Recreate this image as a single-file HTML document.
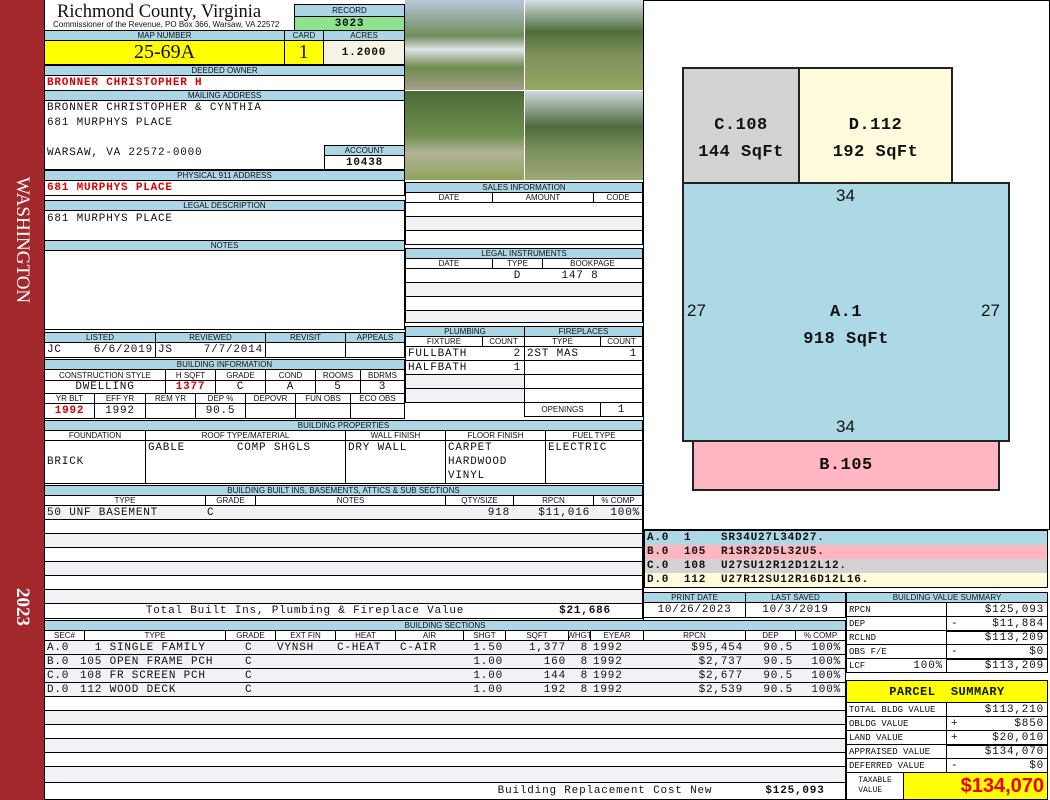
<!DOCTYPE html>
<html><head><meta charset="utf-8"><style>
*{margin:0;padding:0}
body{width:1050px;height:800px;position:relative;background:#fff;overflow:hidden;font-family:"Liberation Mono",monospace;font-size:11px;color:#111;letter-spacing:0.8px}
.a{position:absolute;box-sizing:border-box;border:1px solid #000;display:flex;align-items:center;justify-content:center;white-space:pre;overflow:hidden}
.n{border:none}
.h{background:#acd6e6;font:8px "Liberation Sans",sans-serif;letter-spacing:0}
.l{justify-content:flex-start;padding-left:2px}
.r{justify-content:flex-end;padding-right:3px}
.s{background:#f1f1f6}
.red{color:#d00;font-weight:bold}
.b{font-weight:bold}
.sk{position:absolute;box-sizing:border-box;border:2px solid #222;display:flex;flex-direction:column;align-items:center;justify-content:center;font:bold 17px "Liberation Mono",monospace;line-height:27px;padding-top:27px;letter-spacing:0.5px}
.t{position:absolute;font:17px "Liberation Sans",sans-serif;letter-spacing:0}
.c{position:absolute;white-space:pre;line-height:14px}
.cr{position:absolute;white-space:pre;line-height:14px;text-align:right}
</style></head><body>
<!-- sidebar -->
<div style="position:absolute;left:0;top:0;width:44px;height:800px;background:#a3282b"></div>
<div style="position:absolute;left:22px;top:240px;transform:translate(-50%,-50%) rotate(90deg);color:#fff;font:19px 'Liberation Serif',serif;white-space:nowrap;letter-spacing:0">WASHINGTON</div>
<div style="position:absolute;left:22px;top:607px;transform:translate(-50%,-50%) rotate(90deg);color:#fff;font:bold 19px 'Liberation Serif',serif;letter-spacing:0">2023</div>
<div style="position:absolute;left:44px;top:0;width:1px;height:800px;background:#000"></div>

<!-- title -->
<div style="position:absolute;left:57px;top:2px;font:18.5px 'Liberation Serif',serif;line-height:20px;letter-spacing:0">Richmond County, Virginia</div>
<div style="position:absolute;left:53px;top:20px;font:8px 'Liberation Sans',sans-serif;letter-spacing:0">Commissioner of the Revenue, PO Box 366, Warsaw, VA 22572</div>
<div class="a h" style="left:294px;top:4px;width:111px;height:13px">RECORD</div>
<div class="a b" style="left:294px;top:16px;width:111px;height:15px;background:#8fe38f">3023</div>
<div class="a h" style="left:44px;top:30px;width:241px;height:11px">MAP NUMBER</div>
<div class="a h" style="left:284px;top:30px;width:40px;height:11px">CARD</div>
<div class="a h" style="left:323px;top:30px;width:82px;height:11px">ACRES</div>
<div class="a" style="left:44px;top:40px;width:241px;height:25px;background:#ffff00;font:20px 'Liberation Serif',serif;letter-spacing:0">25-69A</div>
<div class="a" style="left:284px;top:40px;width:40px;height:25px;background:#ffff00;font:20px 'Liberation Serif',serif">1</div>
<div class="a b" style="left:323px;top:40px;width:82px;height:25px;background:#f5f3e6">1.2000</div>
<div class="a h" style="left:44px;top:65px;width:361px;height:11px">DEEDED OWNER</div>
<div class="a l red" style="left:44px;top:75px;width:361px;height:16px">BRONNER CHRISTOPHER H</div>
<div class="a h" style="left:44px;top:90px;width:361px;height:11px">MAILING ADDRESS</div>
<div class="a" style="left:44px;top:100px;width:361px;height:70px"></div>
<div class="a n l" style="left:45px;top:101px;width:280px;height:14px">BRONNER CHRISTOPHER &amp; CYNTHIA</div>
<div class="a n l" style="left:45px;top:116px;width:280px;height:14px">681 MURPHYS PLACE</div>
<div class="a n l" style="left:45px;top:146px;width:280px;height:14px">WARSAW, VA 22572-0000</div>
<div class="a h" style="left:324px;top:145px;width:81px;height:11px">ACCOUNT</div>
<div class="a b" style="left:324px;top:155px;width:81px;height:15px">10438</div>
<div class="a h" style="left:44px;top:170px;width:361px;height:11px">PHYSICAL 911 ADDRESS</div>
<div class="a l red" style="left:44px;top:180px;width:361px;height:16px">681 MURPHYS PLACE</div>
<div class="a h" style="left:44px;top:200px;width:361px;height:11px">LEGAL DESCRIPTION</div>
<div class="a l" style="left:44px;top:210px;width:361px;height:31px;align-items:flex-start;padding-top:2px">681 MURPHYS PLACE</div>
<div class="a h" style="left:44px;top:240px;width:361px;height:11px">NOTES</div>
<div class="a" style="left:44px;top:250px;width:361px;height:80px"></div>

<!-- listed -->
<div class="a h" style="left:44px;top:332px;width:112px;height:11px">LISTED</div>
<div class="a h" style="left:155px;top:332px;width:111px;height:11px">REVIEWED</div>
<div class="a h" style="left:265px;top:332px;width:81px;height:11px">REVISIT</div>
<div class="a h" style="left:345px;top:332px;width:60px;height:11px">APPEALS</div>
<div class="a l" style="left:44px;top:342px;width:112px;height:16px;justify-content:space-between;padding-right:2px">JC<span>6/6/2019</span></div>
<div class="a l" style="left:155px;top:342px;width:111px;height:16px;justify-content:space-between;padding-right:2px">JS<span>7/7/2014</span></div>
<div class="a" style="left:265px;top:342px;width:81px;height:16px"></div>
<div class="a" style="left:345px;top:342px;width:60px;height:16px"></div>

<div class="a h" style="left:44px;top:359px;width:361px;height:11px">BUILDING INFORMATION</div>
<div class="a h" style="left:44px;top:369px;width:122px;height:12px;background:#fff">CONSTRUCTION STYLE</div>
<div class="a h" style="left:165px;top:369px;width:51px;height:12px;background:#fff">H SQFT</div>
<div class="a h" style="left:215px;top:369px;width:51px;height:12px;background:#fff">GRADE</div>
<div class="a h" style="left:265px;top:369px;width:51px;height:12px;background:#fff">COND</div>
<div class="a h" style="left:315px;top:369px;width:46px;height:12px;background:#fff">ROOMS</div>
<div class="a h" style="left:360px;top:369px;width:45px;height:12px;background:#fff">BDRMS</div>
<div class="a" style="left:44px;top:380px;width:122px;height:14px">DWELLING</div>
<div class="a red" style="left:165px;top:380px;width:51px;height:14px">1377</div>
<div class="a" style="left:215px;top:380px;width:51px;height:14px">C</div>
<div class="a" style="left:265px;top:380px;width:51px;height:14px">A</div>
<div class="a" style="left:315px;top:380px;width:46px;height:14px">5</div>
<div class="a" style="left:360px;top:380px;width:45px;height:14px">3</div>
<div class="a h" style="left:44px;top:393px;width:51px;height:11px;background:#fff">YR BLT</div>
<div class="a h" style="left:94px;top:393px;width:52px;height:11px;background:#fff">EFF YR</div>
<div class="a h" style="left:145px;top:393px;width:51px;height:11px;background:#fff">REM YR</div>
<div class="a h" style="left:195px;top:393px;width:51px;height:11px;background:#fff">DEP %</div>
<div class="a h" style="left:245px;top:393px;width:51px;height:11px;background:#fff">DEPOVR</div>
<div class="a h" style="left:295px;top:393px;width:56px;height:11px;background:#fff">FUN OBS</div>
<div class="a h" style="left:350px;top:393px;width:55px;height:11px;background:#fff">ECO OBS</div>
<div class="a red" style="left:44px;top:403px;width:51px;height:16px">1992</div>
<div class="a" style="left:94px;top:403px;width:52px;height:16px">1992</div>
<div class="a" style="left:145px;top:403px;width:51px;height:16px"></div>
<div class="a" style="left:195px;top:403px;width:51px;height:16px">90.5</div>
<div class="a" style="left:245px;top:403px;width:51px;height:16px"></div>
<div class="a" style="left:295px;top:403px;width:56px;height:16px"></div>
<div class="a" style="left:350px;top:403px;width:55px;height:16px"></div>

<!-- photos -->
<div style="position:absolute;left:405px;top:0;width:119px;height:90px;background:linear-gradient(180deg,#b8c7d8 0%,#6f8d5c 40%,#dfe3e6 55%,#6f8a4f 75%,#a39f8a 100%)"></div>
<div style="position:absolute;left:525px;top:0;width:118px;height:90px;background:linear-gradient(180deg,#d6dde3 0%,#4f6e3a 35%,#7f8f5a 60%,#95a860 100%)"></div>
<div style="position:absolute;left:405px;top:91px;width:119px;height:89px;background:linear-gradient(180deg,#4a6b36 0%,#6f8f4e 50%,#b3b39a 70%,#8fa35a 100%)"></div>
<div style="position:absolute;left:525px;top:91px;width:118px;height:89px;background:linear-gradient(180deg,#cfd8df 0%,#4d6b3c 40%,#7a8f5a 65%,#9ea878 100%)"></div>
<div style="position:absolute;left:643px;top:0;width:1px;height:620px;background:#000"></div>

<!-- sales -->
<div class="a h" style="left:405px;top:182px;width:238px;height:11px">SALES INFORMATION</div>
<div class="a h" style="left:405px;top:192px;width:88px;height:11px;background:#fff">DATE</div>
<div class="a h" style="left:492px;top:192px;width:102px;height:11px;background:#fff">AMOUNT</div>
<div class="a h" style="left:593px;top:192px;width:50px;height:11px;background:#fff">CODE</div>
<div class="a" style="left:405px;top:202px;width:238px;height:15px"></div>
<div class="a s" style="left:405px;top:216px;width:238px;height:15px"></div>
<div class="a" style="left:405px;top:230px;width:238px;height:15px"></div>

<div class="a h" style="left:405px;top:248px;width:238px;height:11px">LEGAL INSTRUMENTS</div>
<div class="a h" style="left:405px;top:258px;width:88px;height:11px;background:#fff">DATE</div>
<div class="a h" style="left:492px;top:258px;width:51px;height:11px;background:#fff">TYPE</div>
<div class="a h" style="left:542px;top:258px;width:101px;height:11px;background:#fff">BOOKPAGE</div>
<div class="a" style="left:405px;top:268px;width:238px;height:15px"></div>
<div class="a n" style="left:492px;top:269px;width:51px;height:13px">D</div>
<div class="a n" style="left:555px;top:269px;width:50px;height:13px">147 8</div>
<div class="a s" style="left:405px;top:282px;width:238px;height:15px"></div>
<div class="a" style="left:405px;top:296px;width:238px;height:15px"></div>
<div class="a s" style="left:405px;top:310px;width:238px;height:13px"></div>

<div class="a h" style="left:405px;top:326px;width:120px;height:11px">PLUMBING</div>
<div class="a h" style="left:524px;top:326px;width:119px;height:11px">FIREPLACES</div>
<div class="a h" style="left:405px;top:336px;width:78px;height:11px;background:#fff">FIXTURE</div>
<div class="a h" style="left:482px;top:336px;width:43px;height:11px;background:#fff">COUNT</div>
<div class="a h" style="left:524px;top:336px;width:77px;height:11px;background:#fff">TYPE</div>
<div class="a h" style="left:600px;top:336px;width:43px;height:11px;background:#fff">COUNT</div>
<div class="a l" style="left:405px;top:346px;width:120px;height:15px;justify-content:space-between;padding-right:3px">FULLBATH<span>2</span></div>
<div class="a l" style="left:524px;top:346px;width:119px;height:15px;justify-content:space-between;padding-right:5px">2ST MAS<span>1</span></div>
<div class="a l" style="left:405px;top:360px;width:120px;height:15px;justify-content:space-between;padding-right:3px">HALFBATH<span>1</span></div>
<div class="a" style="left:524px;top:360px;width:119px;height:15px"></div>
<div class="a s" style="left:405px;top:374px;width:120px;height:15px"></div>
<div class="a" style="left:524px;top:374px;width:119px;height:15px"></div>
<div class="a s" style="left:405px;top:388px;width:120px;height:15px"></div>
<div class="a" style="left:524px;top:388px;width:119px;height:15px"></div>
<div class="a h" style="left:524px;top:402px;width:77px;height:15px;background:#fff">OPENINGS</div>
<div class="a" style="left:600px;top:402px;width:43px;height:15px">1</div>

<!-- building properties -->
<div class="a h" style="left:44px;top:420px;width:599px;height:11px">BUILDING PROPERTIES</div>
<div class="a h" style="left:44px;top:430px;width:102px;height:11px;background:#fff">FOUNDATION</div>
<div class="a h" style="left:145px;top:430px;width:201px;height:11px;background:#fff">ROOF TYPE/MATERIAL</div>
<div class="a h" style="left:345px;top:430px;width:101px;height:11px;background:#fff">WALL FINISH</div>
<div class="a h" style="left:445px;top:430px;width:101px;height:11px;background:#fff">FLOOR FINISH</div>
<div class="a h" style="left:545px;top:430px;width:98px;height:11px;background:#fff">FUEL TYPE</div>
<div class="a l" style="left:44px;top:440px;width:102px;height:44px">BRICK</div>
<div class="a l" style="left:145px;top:440px;width:201px;height:44px;align-items:flex-start;line-height:14px">GABLE       COMP SHGLS</div>
<div class="a l" style="left:345px;top:440px;width:101px;height:44px;align-items:flex-start;line-height:14px">DRY WALL</div>
<div class="a l" style="left:445px;top:440px;width:101px;height:44px;align-items:flex-start;line-height:14px">CARPET
HARDWOOD
VINYL</div>
<div class="a l" style="left:545px;top:440px;width:98px;height:44px;align-items:flex-start;line-height:14px">ELECTRIC</div>

<!-- built ins -->
<div class="a h" style="left:44px;top:485px;width:599px;height:11px">BUILDING BUILT INS, BASEMENTS, ATTICS &amp; SUB SECTIONS</div>
<div class="a h" style="left:44px;top:495px;width:162px;height:11px;background:#fff">TYPE</div>
<div class="a h" style="left:205px;top:495px;width:51px;height:11px;background:#fff">GRADE</div>
<div class="a h" style="left:255px;top:495px;width:191px;height:11px;background:#fff">NOTES</div>
<div class="a h" style="left:445px;top:495px;width:69px;height:11px;background:#fff">QTY/SIZE</div>
<div class="a h" style="left:513px;top:495px;width:81px;height:11px;background:#fff">RPCN</div>
<div class="a h" style="left:593px;top:495px;width:50px;height:11px;background:#fff">% COMP</div>
<div class="a s" style="left:44px;top:505px;width:599px;height:15px"></div>
<div class="a n l" style="left:45px;top:506px;width:160px;height:13px">50 UNF BASEMENT</div>
<div class="a n l" style="left:205px;top:506px;width:40px;height:13px">C</div>
<div class="a n r" style="left:445px;top:506px;width:68px;height:13px">918</div>
<div class="a n r" style="left:513px;top:506px;width:80px;height:13px">$11,016</div>
<div class="a n r" style="left:593px;top:506px;width:50px;height:13px">100%</div>
<div class="a" style="left:44px;top:519px;width:599px;height:15px"></div>
<div class="a s" style="left:44px;top:533px;width:599px;height:15px"></div>
<div class="a" style="left:44px;top:547px;width:599px;height:15px"></div>
<div class="a s" style="left:44px;top:561px;width:599px;height:15px"></div>
<div class="a" style="left:44px;top:575px;width:599px;height:15px"></div>
<div class="a s" style="left:44px;top:589px;width:599px;height:15px"></div>
<div class="a" style="left:44px;top:603px;width:599px;height:16px"></div>
<div class="a n" style="left:100px;top:604px;width:410px;height:14px">Total Built Ins, Plumbing &amp; Fireplace Value</div>
<div class="a n b" style="left:540px;top:604px;width:90px;height:14px">$21,686</div>

<!-- building sections -->
<div class="a h" style="left:44px;top:620px;width:802px;height:11px">BUILDING SECTIONS</div>
<div class="a h" style="left:44px;top:630px;width:41px;height:11px;background:#fff">SEC#</div>
<div class="a h" style="left:84px;top:630px;width:142px;height:11px;background:#fff">TYPE</div>
<div class="a h" style="left:225px;top:630px;width:51px;height:11px;background:#fff">GRADE</div>
<div class="a h" style="left:275px;top:630px;width:61px;height:11px;background:#fff">EXT FIN</div>
<div class="a h" style="left:335px;top:630px;width:61px;height:11px;background:#fff">HEAT</div>
<div class="a h" style="left:395px;top:630px;width:69px;height:11px;background:#fff">AIR</div>
<div class="a h" style="left:463px;top:630px;width:43px;height:11px;background:#fff">SHGT</div>
<div class="a h" style="left:505px;top:630px;width:64px;height:11px;background:#fff">SQFT</div>
<div class="a h" style="left:568px;top:630px;width:23px;height:11px;background:#fff">WHGT</div>
<div class="a h" style="left:590px;top:630px;width:54px;height:11px;background:#fff">EYEAR</div>
<div class="a h" style="left:643px;top:630px;width:103px;height:11px;background:#fff">RPCN</div>
<div class="a h" style="left:745px;top:630px;width:51px;height:11px;background:#fff">DEP</div>
<div class="a h" style="left:795px;top:630px;width:51px;height:11px;background:#fff">% COMP</div>
<div class="a s" style="left:44px;top:640px;width:802px;height:15px"></div>
<div class="a s" style="left:44px;top:654px;width:802px;height:15px"></div>
<div class="a s" style="left:44px;top:668px;width:802px;height:15px"></div>
<div class="a s" style="left:44px;top:682px;width:802px;height:15px"></div>
<div class="a" style="left:44px;top:696px;width:802px;height:15px"></div>
<div class="a s" style="left:44px;top:710px;width:802px;height:15px"></div>
<div class="a" style="left:44px;top:724px;width:802px;height:15px"></div>
<div class="a s" style="left:44px;top:738px;width:802px;height:15px"></div>
<div class="a" style="left:44px;top:752px;width:802px;height:15px"></div>
<div class="a s" style="left:44px;top:766px;width:802px;height:17px"></div>
<div class="a" style="left:44px;top:782px;width:802px;height:18px"></div>
<div class="a n" style="left:490px;top:783px;width:230px;height:16px">Building Replacement Cost New</div>
<div class="a n b" style="left:750px;top:783px;width:90px;height:16px">$125,093</div>

<div class="c" style="left:47px;top:641px">A.0
B.0
C.0
D.0</div>
<div class="c" style="left:80px;top:641px">  1 SINGLE FAMILY
105 OPEN FRAME PCH
108 FR SCREEN PCH
112 WOOD DECK</div>
<div class="c" style="left:245px;top:641px">C
C
C
C</div>
<div class="c" style="left:277px;top:641px">VYNSH</div>
<div class="c" style="left:337px;top:641px">C-HEAT</div>
<div class="c" style="left:400px;top:641px">C-AIR</div>
<div class="cr" style="left:455px;top:641px;width:48px">1.50
1.00
1.00
1.00</div>
<div class="cr" style="left:505px;top:641px;width:61px">1,377
160
144
192</div>
<div class="cr" style="left:568px;top:641px;width:20px">8
8
8
8</div>
<div class="c" style="left:593px;top:641px">1992
1992
1992
1992</div>
<div class="cr" style="left:643px;top:641px;width:100px">$95,454
$2,737
$2,677
$2,539</div>
<div class="cr" style="left:745px;top:641px;width:48px">90.5
90.5
90.5
90.5</div>
<div class="cr" style="left:795px;top:641px;width:46px">100%
100%
100%
100%</div>

<!-- sketch -->
<div style="position:absolute;left:643px;top:0;width:407px;height:530px;box-sizing:border-box;border:1px solid #000;border-left:none"></div>
<div class="sk" style="left:682px;top:67px;width:118px;height:117px;background:#d3d3d3"><div>C.108</div><div>144 SqFt</div></div>
<div class="sk" style="left:798px;top:67px;width:155px;height:117px;background:#fffbdc"><div>D.112</div><div>192 SqFt</div></div>
<div class="sk" style="left:692px;top:440px;width:308px;height:51px;background:#ffb6c1;padding-top:0"><div>B.105</div></div>
<div class="sk" style="left:682px;top:182px;width:328px;height:260px;background:#add8e6"><div>A.1</div><div>918 SqFt</div></div>
<div class="t" style="left:836px;top:186px">34</div>
<div class="t" style="left:836px;top:417px">34</div>
<div class="t" style="left:687px;top:301px">27</div>
<div class="t" style="left:981px;top:301px">27</div>

<!-- legend -->
<div style="position:absolute;left:644px;top:530px;width:404px;height:58px;border:1px solid #000;box-sizing:border-box;font:bold 11px 'Liberation Mono',monospace;letter-spacing:0.8px;line-height:14px;white-space:pre"><div style="background:#add8e6;padding-left:2px">A.0  1    SR34U27L34D27.</div><div style="background:#ffb6c1;padding-left:2px">B.0  105  R1SR32D5L32U5.</div><div style="background:#d3d3d3;padding-left:2px">C.0  108  U27SU12R12D12L12.</div><div style="background:#fffbdc;padding-left:2px">D.0  112  U27R12SU12R16D12L16.</div></div>

<div class="a h" style="left:643px;top:592px;width:103px;height:11px">PRINT DATE</div>
<div class="a h" style="left:745px;top:592px;width:101px;height:11px">LAST SAVED</div>
<div class="a" style="left:643px;top:602px;width:103px;height:16px">10/26/2023</div>
<div class="a" style="left:745px;top:602px;width:101px;height:16px">10/3/2019</div>

<!-- value summary -->
<div class="a h" style="left:846px;top:592px;width:202px;height:11px">BUILDING VALUE SUMMARY</div>
<div class="a l" style="left:846px;top:602px;width:101px;height:15px;font-size:9px;letter-spacing:0">RPCN</div><div class="a r" style="left:946px;top:602px;width:102px;height:15px">$125,093</div>
<div class="a l" style="left:846px;top:616px;width:101px;height:15px;font-size:9px;letter-spacing:0">DEP</div><div class="a r" style="left:946px;top:616px;width:102px;height:15px;justify-content:space-between;padding-left:4px">-<span>$11,884</span></div>
<div class="a l" style="left:846px;top:630px;width:101px;height:15px;font-size:9px;letter-spacing:0">RCLND</div><div class="a r" style="left:946px;top:630px;width:102px;height:15px;border-top-width:2px">$113,209</div>
<div class="a l" style="left:846px;top:644px;width:101px;height:15px;font-size:9px;letter-spacing:0">OBS F/E</div><div class="a r" style="left:946px;top:644px;width:102px;height:15px;justify-content:space-between;padding-left:4px">-<span>$0</span></div>
<div class="a l" style="left:846px;top:658px;width:101px;height:15px;font-size:9px;letter-spacing:0;justify-content:space-between;padding-right:3px">LCF<span style="font-size:11px;letter-spacing:0.8px">100%</span></div><div class="a r" style="left:946px;top:658px;width:102px;height:15px;border-top-width:2px">$113,209</div>

<!-- parcel summary -->
<div class="a" style="left:846px;top:680px;width:202px;height:23px;background:#ffff00;font:bold 12px 'Liberation Mono',monospace;letter-spacing:0.5px">PARCEL  SUMMARY</div>
<div class="a l" style="left:846px;top:702px;width:101px;height:15px;font-size:9px;letter-spacing:0">TOTAL BLDG VALUE</div><div class="a r" style="left:946px;top:702px;width:102px;height:15px">$113,210</div>
<div class="a l" style="left:846px;top:716px;width:101px;height:15px;font-size:9px;letter-spacing:0">OBLDG VALUE</div><div class="a r" style="left:946px;top:716px;width:102px;height:15px;justify-content:space-between;padding-left:4px">+<span>$850</span></div>
<div class="a l" style="left:846px;top:730px;width:101px;height:15px;font-size:9px;letter-spacing:0">LAND VALUE</div><div class="a r" style="left:946px;top:730px;width:102px;height:15px;justify-content:space-between;padding-left:4px">+<span>$20,010</span></div>
<div class="a l" style="left:846px;top:744px;width:101px;height:15px;font-size:9px;letter-spacing:0">APPRAISED VALUE</div><div class="a r" style="left:946px;top:744px;width:102px;height:15px;border-top-width:2px">$134,070</div>
<div class="a l" style="left:846px;top:758px;width:101px;height:15px;font-size:9px;letter-spacing:0">DEFERRED VALUE</div><div class="a r" style="left:946px;top:758px;width:102px;height:15px;justify-content:space-between;padding-left:4px">-<span>$0</span></div>
<div class="a" style="left:846px;top:772px;width:58px;height:28px;font:8px 'Liberation Mono',monospace;letter-spacing:0;flex-direction:column;line-height:10px">TAXABLE<br>VALUE</div>
<div class="a r" style="left:903px;top:772px;width:145px;height:28px;background:#ffff00;color:#e00;font:bold 20px 'Liberation Sans',sans-serif;letter-spacing:0">$134,070</div>
</body></html>
